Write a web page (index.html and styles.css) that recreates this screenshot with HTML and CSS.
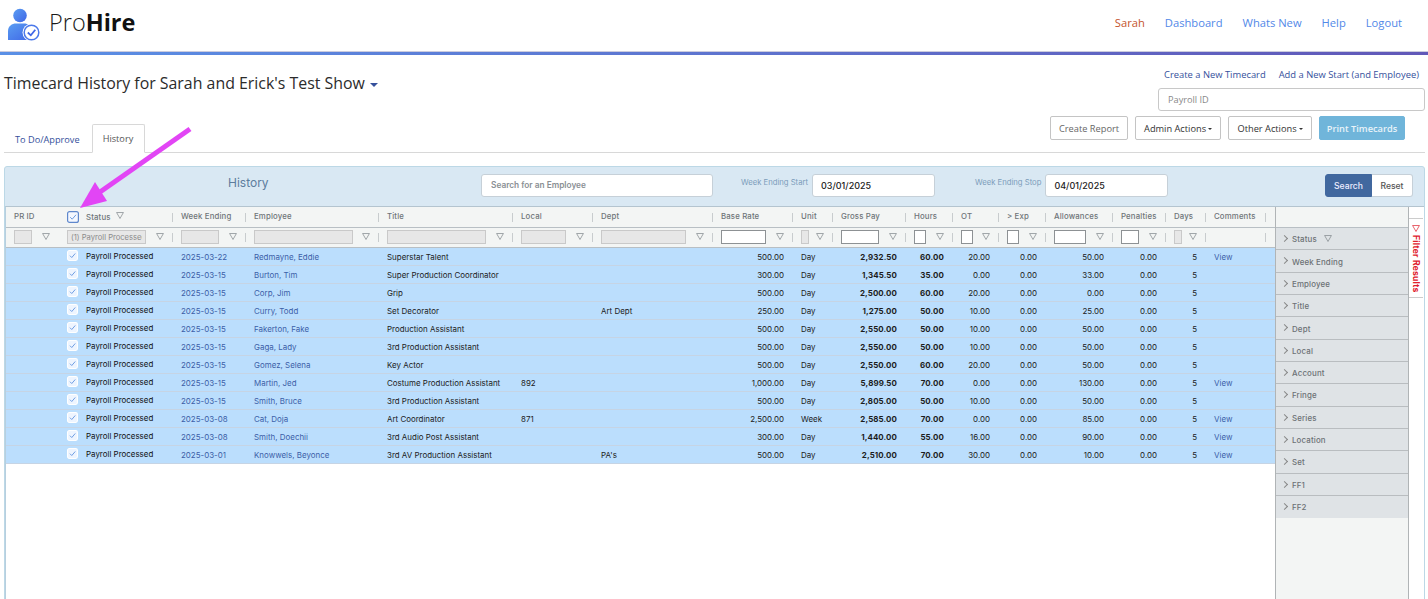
FILE: index.html
```html
<!DOCTYPE html>
<html lang="en">
<head>
<meta charset="utf-8">
<title>Timecard History</title>
<link rel="stylesheet" href="styles.css">
</head>
<body>
<svg class="sprite" width="0" height="0">
  <defs>
    <symbol id="funnel" viewBox="0 0 9 8"><path d="M.6.6h7.8L4.500 7.400z" fill="none" stroke="currentColor" stroke-width=".8" stroke-linejoin="round"/></symbol>
    <symbol id="check" viewBox="0 0 12 12"><rect x=".6" y=".6" width="10.8" height="10.8" rx="2" fill="#eef5ff" stroke="#fff" stroke-width="1.2"/><path d="M3.200 6.200l2 2 3.800-4.400" fill="none" stroke="#6496e0" stroke-width="1"/></symbol>
    <symbol id="check-all" viewBox="0 0 12 12"><rect x=".6" y=".6" width="10.800" height="10.800" rx="2" fill="#f4f8ff" stroke="#5f88cc" stroke-width="1.200"/><path d="M3.200 6.200l2 2 3.800-4.400" fill="none" stroke="#6f9ee0" stroke-width="1"/></symbol>
  </defs>
</svg>
<header class="topbar">
  <a class="brand" href="#">
    <svg class="brand-icon" width="40" height="40" viewBox="0 0 40 40">
      <defs><linearGradient id="lg" x1="0" y1="0" x2="1" y2="1"><stop offset="0" stop-color="#5a9df2"/><stop offset="1" stop-color="#3f66e6"/></linearGradient></defs>
      <circle cx="20" cy="13.5" r="6.8" fill="url(#lg)"/>
      <path d="M8 38v-9c0-5 4-7.500 8-7.500h8c4 0 7 2 8 7.500v9z" fill="url(#lg)"/>
      <circle cx="31.500" cy="30.500" r="9" fill="#fff"/>
      <circle cx="31.500" cy="30.500" r="7.300" fill="none" stroke="#4a78ea" stroke-width="1.500"/>
      <path d="M27.800 30.500l3 2.800 4.500-5.500" fill="none" stroke="#3f66e6" stroke-width="1.800"/>
    </svg>
    <span class="brand-name">Pro<b>Hire</b></span>
  </a>
  <nav class="topnav">
    <a class="user" href="#">Sarah</a>
    <a href="#">Dashboard</a>
    <a href="#">Whats New</a>
    <a href="#">Help</a>
    <a href="#">Logout</a>
  </nav>
</header>
<div class="rule"></div>

<section class="pagehead">
  <div class="pagehead-left">
    <h1>Timecard History for Sarah and Erick's Test Show <i class="caret big"></i></h1>
    <div class="tabs">
      <a class="tab" href="#">To Do/Approve</a>
      <a class="tab active" href="#">History</a>
    </div>
  </div>
  <div class="pagehead-right">
    <div class="quick"><a href="#">Create a New Timecard</a><a href="#">Add a New Start (and Employee)</a></div>
    <input class="payroll" placeholder="Payroll ID">
    <div class="actions">
      <button class="btn muted">Create Report</button>
      <button class="btn">Admin Actions <i class="caret"></i></button>
      <button class="btn">Other Actions <i class="caret"></i></button>
      <button class="btn print">Print Timecards</button>
    </div>
  </div>
</section>

<main class="panel">
  <div class="panel-head">
    <h2>History</h2>
    <input class="emp-search" placeholder="Search for an Employee">
    <label class="date first">Week Ending Start<input value="03/01/2025"></label>
    <label class="date">Week Ending Stop<input value="04/01/2025"></label>
    <div class="search-btns"><button class="go">Search</button><button class="reset">Reset</button></div>
  </div>
  <div class="grid-wrap">
    <div class="grid">
      <div class="row head">
        <div class="c">PR ID</div>
        <div class="c status-c"><svg class="cb focus"><use href="#check-all"/></svg><span>Status</span><svg class="fn hf"><use href="#funnel"/></svg></div>
        <div class="c sep">Week Ending</div>
        <div class="c sep">Employee</div>
        <div class="c sep">Title</div>
        <div class="c sep">Local</div>
        <div class="c sep">Dept</div>
        <div class="c sep">Base Rate</div>
        <div class="c sep">Unit</div>
        <div class="c sep">Gross Pay</div>
        <div class="c sep">Hours</div>
        <div class="c sep">OT</div>
        <div class="c sep">&gt; Exp</div>
        <div class="c sep">Allowances</div>
        <div class="c sep">Penalties</div>
        <div class="c sep">Days</div>
        <div class="c sep">Comments</div>
        <div class="c sep"></div>
      </div>
      <div class="row filters">
        <div class="f"><input class="off w18" disabled><svg class="fn"><use href="#funnel"/></svg></div>
        <div class="f f-status"><input class="off w79" disabled value="(1) Payroll Processed"><svg class="fn"><use href="#funnel"/></svg></div>
        <div class="f sep"><input class="off w38" disabled><svg class="fn"><use href="#funnel"/></svg></div>
        <div class="f sep"><input class="off w99" disabled><svg class="fn"><use href="#funnel"/></svg></div>
        <div class="f sep"><input class="off w99" disabled><svg class="fn"><use href="#funnel"/></svg></div>
        <div class="f sep"><input class="off w45" disabled><svg class="fn"><use href="#funnel"/></svg></div>
        <div class="f sep"><input class="off w85" disabled><svg class="fn"><use href="#funnel"/></svg></div>
        <div class="f sep"><input class="on w45"><svg class="fn"><use href="#funnel"/></svg></div>
        <div class="f sep"><input class="off w6" disabled><svg class="fn"><use href="#funnel"/></svg></div>
        <div class="f sep"><input class="on w38"><svg class="fn"><use href="#funnel"/></svg></div>
        <div class="f sep"><input class="on w12"><svg class="fn"><use href="#funnel"/></svg></div>
        <div class="f sep"><input class="on w12"><svg class="fn"><use href="#funnel"/></svg></div>
        <div class="f sep"><input class="on w12"><svg class="fn"><use href="#funnel"/></svg></div>
        <div class="f sep"><input class="on w32"><svg class="fn"><use href="#funnel"/></svg></div>
        <div class="f sep"><input class="on w18"><svg class="fn"><use href="#funnel"/></svg></div>
        <div class="f sep"><input class="off w6" disabled><svg class="fn"><use href="#funnel"/></svg></div>
        <div class="f sep"></div>
        <div class="f sep"></div>
      </div>
      <div id="rows"></div>
    </div>
    <aside class="side">
      <div class="side-top"></div>
      <ul class="side-list">
        <li>Status <svg class="fn hf"><use href="#funnel"/></svg></li>
        <li>Week Ending</li>
        <li>Employee</li>
        <li>Title</li>
        <li>Dept</li>
        <li>Local</li>
        <li>Account</li>
        <li>Fringe</li>
        <li>Series</li>
        <li>Location</li>
        <li>Set</li>
        <li>FF1</li>
        <li>FF2</li>
      </ul>
    </aside>
    <div class="strip">
      <div class="strip-tab"><svg class="fn red"><use href="#funnel"/></svg><span>Filter Results</span></div>
    </div>
  </div>
</main>

<svg class="pointer" width="130" height="90" viewBox="0 0 130 90">
  <path d="M125 3L35 66" stroke="#e245f5" stroke-width="5" fill="none"/>
  <path d="M15 82L30 56 42 75z" fill="#e245f5"/>
</svg>

<script src="rows.js"></script>
</body>
</html>
```
FILE: rows.js
```js
const data = [
  ["2025-03-22","Redmayne, Eddie","Superstar Talent","","","500.00","Day","2,932.50","60.00","20.00","0.00","50.00","0.00","5","View"],
  ["2025-03-15","Burton, Tim","Super Production Coordinator","","","300.00","Day","1,345.50","35.00","0.00","0.00","33.00","0.00","5",""],
  ["2025-03-15","Corp, Jim","Grip","","","500.00","Day","2,500.00","60.00","20.00","0.00","0.00","0.00","5",""],
  ["2025-03-15","Curry, Todd","Set Decorator","","Art Dept","250.00","Day","1,275.00","50.00","10.00","0.00","25.00","0.00","5",""],
  ["2025-03-15","Fakerton, Fake","Production Assistant","","","500.00","Day","2,550.00","50.00","10.00","0.00","50.00","0.00","5",""],
  ["2025-03-15","Gaga, Lady","3rd Production Assistant","","","500.00","Day","2,550.00","50.00","10.00","0.00","50.00","0.00","5",""],
  ["2025-03-15","Gomez, Selena","Key Actor","","","500.00","Day","2,550.00","60.00","20.00","0.00","50.00","0.00","5",""],
  ["2025-03-15","Martin, Jed","Costume Production Assistant","892","","1,000.00","Day","5,899.50","70.00","0.00","0.00","130.00","0.00","5","View"],
  ["2025-03-15","Smith, Bruce","3rd Production Assistant","","","500.00","Day","2,805.00","50.00","10.00","0.00","50.00","0.00","5",""],
  ["2025-03-08","Cat, Doja","Art Coordinator","871","","2,500.00","Week","2,585.00","70.00","0.00","0.00","85.00","0.00","5","View"],
  ["2025-03-08","Smith, Doechii","3rd Audio Post Assistant","","","300.00","Day","1,440.00","55.00","16.00","0.00","90.00","0.00","5","View"],
  ["2025-03-01","Knowwels, Beyonce","3rd AV Production Assistant","","PA's","500.00","Day","2,510.00","70.00","30.00","0.00","10.00","0.00","5","View"]
];
const kinds = ["link","link","","","","num","","num b","num b","num","num","num","num","num","link"];
const host = document.getElementById("rows");
for (const r of data) {
  const row = document.createElement("div");
  row.className = "row item";
  row.innerHTML = '<div class="c"></div><div class="c status-c"><svg class="cb"><use href="#check"/></svg><span class="st">Payroll Processed</span></div>' +
    r.map((v, i) => `<div class="c ${kinds[i]}">${v}</div>`).join("") + '<div class="c"></div>';
  host.appendChild(row);
}
```
FILE: styles.css
```css
* { box-sizing: border-box; }
html, body { height: 599px; overflow: hidden; }
body { margin: 0; background: #fff; color: #222; font-family: "Open Sans", sans-serif; position: relative; }
a { text-decoration: none; color: #35509c; }
.sprite { position: absolute; }

.topbar { height: 51px; display: flex; justify-content: space-between; align-items: flex-start; }
.brand { display: flex; align-items: center; color: #111; margin-top: 2px; }
.brand-icon { display: block; }
.brand-name { font-size: 23.5px; margin-left: 9px; line-height: 40px; color: #1a1a1a; font-weight: 300; }
.brand-name b { font-weight: 700; color: #111; }
.topnav { display: flex; gap: 20px; padding: 15px 26px 0 0; font-size: 11.2px; line-height: 16px; }
.topnav a { color: #5288e8; }
.topnav .user { color: #c4532c; }
.rule { height: 4px; border-top: 1px solid #ccd; background: linear-gradient(90deg, #5a90e6, #6158b8); }

.pagehead { display: flex; justify-content: space-between; height: 98px; margin: 0 3px 0 4px; border-bottom: 1px solid #d8d8d8; }
.pagehead-left { display: flex; flex-direction: column; justify-content: space-between; flex: 1; }
h1 { margin: 17px 0 0; font-size: 15.9px; font-weight: 400; line-height: 22px; color: #2b2b2b; }
.caret { display: inline-block; border: 2.5px solid transparent; border-top-color: #333; border-bottom: 0; vertical-align: middle; }
.caret.big { border-width: 4px 4px 0; border-top-color: #35509c; margin-left: 1px; }
.tabs { display: flex; height: 29px; align-items: flex-end; margin-bottom: -1px; }
.tab { font-size: 9.2px; padding: 0 10px; height: 28px; line-height: 28px; border: 1px solid transparent; }
.tab.active { color: #555; background: #fff; border-color: #d8d8d8; border-bottom-color: #fff; border-radius: 2px 2px 0 0; height: 29px; margin-left: 1px; width: 53px; }
.pagehead-right { width: 350px; display: flex; flex-direction: column; align-items: flex-end; padding-top: 14px; }
.quick { display: flex; gap: 13px; font-size: 9.4px; line-height: 12px; padding-right: 6px; }
.payroll { width: 267px; height: 23px; margin-top: 7px; border: 1px solid #c8c8c8; border-radius: 3px; padding: 0 9px; font: 9.2px "Open Sans", sans-serif; }
.payroll::placeholder { color: #888; opacity: 1; }
.actions { display: flex; gap: 7px; margin-top: 5px; margin-right: 20px; }
.btn { height: 24px; padding: 0 8px; border: 1px solid #c4c4c4; background: #fff; border-radius: 2px; font: 9.25px "Open Sans", sans-serif; color: #333; white-space: nowrap; }
.btn.muted { color: #666; }
.btn.print { width: 86px; padding: 0; background: #70b5da; border-color: #70b5da; color: #e9f3f9; font-weight: 600; }

.panel { position: absolute; left: 4px; right: 3px; top: 166px; height: 440px; background: #d9e8f3; border: 1px solid #bcd8e6; border-radius: 3px 3px 0 0; }
.panel-head { height: 39px; display: flex; align-items: flex-start; font-family: Inter, sans-serif; }
h2 { margin: 8px 0 0 223px; width: 253px; font-size: 12px; line-height: 16px; font-weight: 400; color: #5d7d9d; }
.emp-search { width: 232px; height: 23px; margin-top: 7px; border: 1px solid #c6d0d8; border-radius: 3px; padding: 0 9px 1px; font: 600 8.3px Inter, sans-serif; }
.emp-search::placeholder { color: #8a8f94; opacity: 1; }
.date { margin: 7px 0 0; font-size: 7.7px; line-height: 18px; color: #7b9cba; display: flex; align-items: flex-start; gap: 4px; }
.date.first { margin-left: 28px; }
.date + .date { margin-left: 40px; }
.date input { width: 123px; height: 23px; border: 1px solid #c6d0d8; border-radius: 3px; padding: 0 8px; font: 500 9px Inter, sans-serif; color: #222; }
.search-btns { display: flex; margin: 7px 0 0 auto; padding-right: 11px; }
.go, .reset { height: 23px; font: 500 8.6px Inter, sans-serif; border-radius: 3px; }
.go { width: 47px; background: #41689f; color: #eef; border: 1px solid #41689f; border-radius: 3px 0 0 3px; }
.reset { width: 41px; background: #fff; color: #555; border: 1px solid #c6d0d8; border-left: 0; border-radius: 0 3px 3px 0; }

.grid-wrap { display: flex; height: 400px; background: #fff; border-top: 1px solid #b4c4cf; border-left: 1px solid #b7cfdf; font-family: Inter, sans-serif; }
.grid { width: 1269px; overflow: hidden; font-size: 7.95px; }
.row { display: grid; grid-template-columns: 56px 110px 73px 133px 134px 80px 120px 80px 40px 73px 47px 46px 47px 67px 53px 40px 60px 10px; }
.head { height: 21px; background: #f3f5f4; border-bottom: 1px solid #b8bfc4; font-weight: 500; color: #6e7478; letter-spacing: .15px; font-size: 7.8px; }
.head .c { line-height: 19px; padding: 0 0 0 9px; }
.head .c:first-child { padding-left: 8px; }
.head .sep, .filters .sep { position: relative; }
.head .sep::before, .filters .sep::before { content: ""; position: absolute; left: 0; top: 6px; height: 9px; border-left: 1px solid #c8ccce; }
.status-c { display: flex; align-items: center; padding-left: 5px !important; }
.filters .sep::before { top: 5px; }
.filters { height: 20px; background: #f3f5f4; border-bottom: 1px solid #b8bfc4; }
.f { display: flex; align-items: center; padding: 0 0 1px 9px; position: relative; }
.f:first-child { padding-left: 8px; }
.f-status { padding-left: 5px; }
.f input { height: 14px; border: 1px solid #8d9194; background: #fff; padding: 0 3px; margin: 0; font: 7.6px Inter, sans-serif; color: #8b8b8b; flex: none; }
.f input.off { background: #e7e7e7; border-color: #c9c9c9; }
.fn { width: 8px; height: 7px; color: #7c8488; flex: none; }
.f .fn { position: absolute; right: 8px; top: 5px; }
.f:first-child .fn { right: 12px; }
.hf { margin-left: 5px; margin-top: -3px; }
.w6 { width: 6px; } .w12 { width: 12px; } .w18 { width: 18px; } .w32 { width: 32px; } .w38 { width: 38px; }
.w45 { width: 45px; } .w79 { width: 79px; } .w85 { width: 85px; } .w99 { width: 99px; }
.cb { width: 11px; height: 11px; margin-right: 8px; flex: none; }
.head .cb { width: 12px; height: 12px; margin-right: 7px; }
.item { height: 18px; background: #bbdefd; border-bottom: 1px solid #c6d4e4; color: #1c1c1c; }
.item .c { line-height: 19px; padding: 0 8px 0 9px; white-space: nowrap; overflow: hidden; }
.item .status-c { overflow: visible; padding-bottom: 1px; }
.item .cb { margin-top: -1px; }
.st { line-height: 14px; color: #111; }
.item .link { color: #3c5ea8; }
.item .num { text-align: right; }
.item .b { font-weight: 700; letter-spacing: .1px; }

.side { width: 134px; flex: none; background: #f3f5f4; border-left: 1px solid #b0b4b6; border-right: 1px solid #b0b4b6; font-size: 7.9px; color: #6c7175; font-weight: 500; }
.side-top { height: 21px; border-bottom: 1px solid #b8bfc4; }
.side-list { list-style: none; margin: 0; padding: 0; }
.side-list li { height: 22.33px; line-height: 22px; padding-top: .2px; margin-top: 0; background: #dfe3e6; border-bottom: 1px solid #b9bdc0; padding-left: 16px; position: relative; letter-spacing: .15px; }
.side-list li:last-child { border-bottom: 0; }
.side-list li::before { content: ""; position: absolute; left: 6px; top: 8px; width: 4px; height: 4px; border-top: 1px solid #888; border-right: 1px solid #888; transform: rotate(45deg); }
.strip { width: 14px; flex: none; background: #fff; padding-top: 11px; }
.strip-tab { height: 80px; border-top: 1px solid #ccc; border-bottom: 1px solid #ccc; background: #fff; display: flex; flex-direction: column; align-items: center; padding-top: 6px; gap: 3px; color: #e0202c; }
.fn.red { color: #e0202c; }
.strip-tab span { writing-mode: vertical-rl; font-size: 8.6px; font-weight: 700; letter-spacing: .2px; line-height: 10px; white-space: nowrap; }

.pointer { position: absolute; left: 65px; top: 126px; }
```
